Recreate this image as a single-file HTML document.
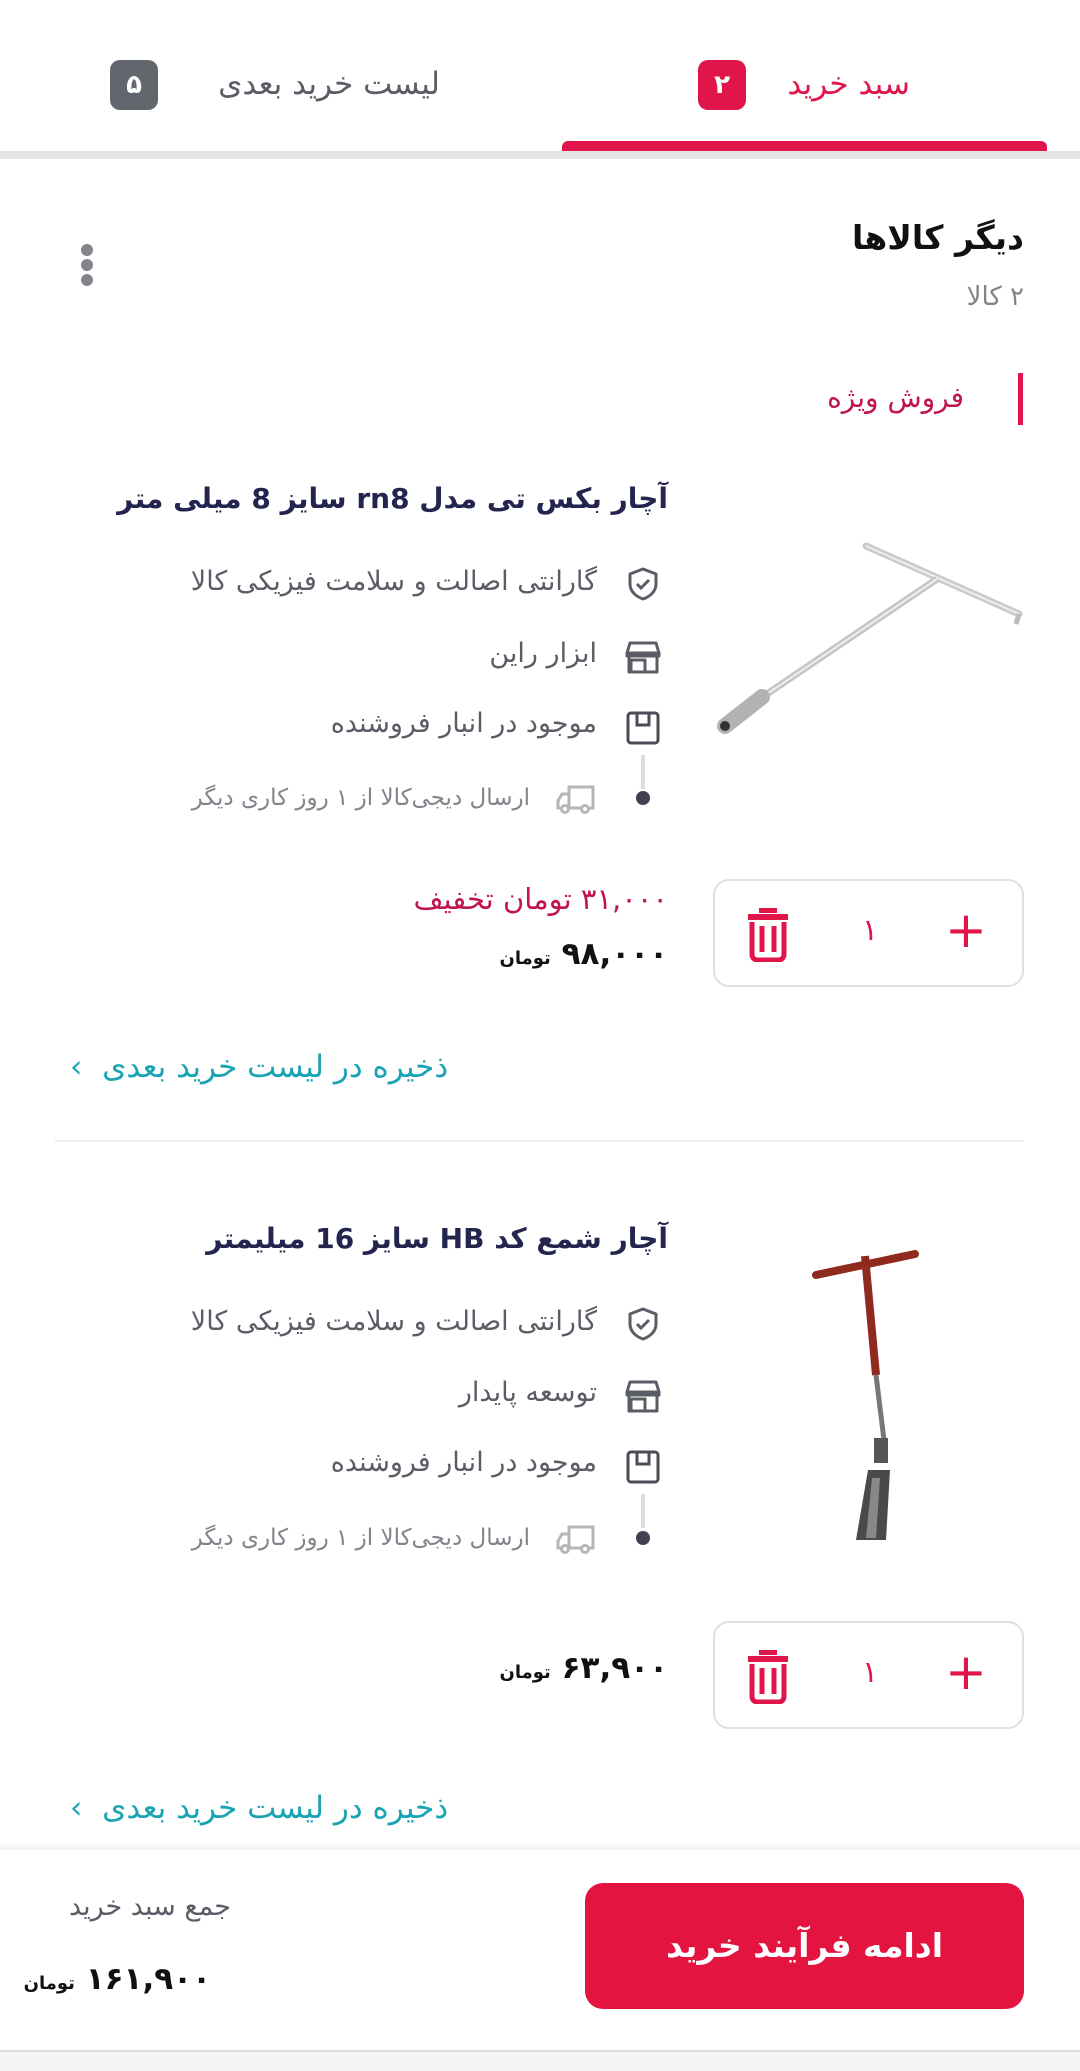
<!DOCTYPE html>
<html><head><meta charset="utf-8">
<style>
*{margin:0;padding:0;box-sizing:border-box}
body{width:1080px;height:2071px;position:relative;background:#fff;font-family:"DejaVu Sans",sans-serif;overflow:hidden;direction:rtl}
.a{position:absolute;white-space:nowrap}
.t{color:#5a5c66;font-size:27px}
.ic{position:absolute}
.badge{position:absolute;width:48px;height:50px;border-radius:10px;color:#fff;font-size:26px;font-weight:bold;text-align:center;line-height:50px}
</style></head><body>
<!-- tabs -->
<div class="a" style="right:170px;top:66px;font-size:31px;color:#e0164a;">سبد خرید</div>
<div class="badge" style="left:698px;top:60px;background:#e0164a">۲</div>
<div class="a" style="right:640px;top:66px;font-size:31px;color:#5a5c66;">لیست خرید بعدی</div>
<div class="badge" style="left:110px;top:60px;background:#62666d">۵</div>
<div class="a" style="left:562px;top:141px;width:485px;height:10px;background:#e0164a;border-radius:6px 6px 0 0"></div>
<div class="a" style="left:0;top:151px;width:1080px;height:8px;background:#e4e4e4"></div>

<div class="a" style="right:56px;top:218px;font-size:33px;font-weight:bold;color:#111">دیگر کالاها</div>
<div class="a" style="right:56px;top:282px;font-size:26px;color:#81858b">۲ کالا</div>
<div class="a" style="left:81px;top:244px;width:12px;height:12px;border-radius:6px;background:#81858b"></div>
<div class="a" style="left:81px;top:259px;width:12px;height:12px;border-radius:6px;background:#81858b"></div>
<div class="a" style="left:81px;top:274px;width:12px;height:12px;border-radius:6px;background:#81858b"></div>

<div class="a" style="left:1018px;top:373px;width:5px;height:52px;background:#e0164a"></div>
<div class="a" style="right:116px;top:381px;font-size:28px;color:#c0144a">فروش ویژه</div>

<!-- product 1 -->
<div class="a" style="right:412px;top:482px;font-size:28px;font-weight:bold;color:#23254e">آچار بکس تی مدل rn8 سایز 8 میلی متر</div>
<svg class="ic" style="left:700px;top:520px" width="340" height="240" viewBox="700 520 340 240">
<line x1="866" y1="546" x2="1019" y2="614" stroke="#c9cacc" stroke-width="7" stroke-linecap="round"/>
<line x1="866" y1="546" x2="1019" y2="614" stroke="#eee" stroke-width="2"/>
<line x1="1019" y1="614" x2="1016" y2="624" stroke="#bbb" stroke-width="5"/>
<line x1="937" y1="579" x2="758" y2="700" stroke="#c4c5c7" stroke-width="7"/>
<line x1="937" y1="579" x2="758" y2="700" stroke="#eee" stroke-width="2"/>
<line x1="762" y1="697" x2="725" y2="726" stroke="#b0b2b4" stroke-width="16" stroke-linecap="round"/>
<circle cx="725" cy="726" r="5" fill="#333"/>
</svg>
<svg class="ic" style="left:627px;top:567px" width="32" height="34" viewBox="0 0 32 34"><path d="M16 2 L29 7 V17 C29 25 22 30 16 32 C10 30 3 25 3 17 V7 Z" fill="none" stroke="#5a5c66" stroke-width="3" stroke-linejoin="round"/><path d="M10 17 L14 21 L22 13" fill="none" stroke="#5a5c66" stroke-width="3"/></svg>
<div class="a t" style="right:483px;top:566px">گارانتی اصالت و سلامت فیزیکی کالا</div>
<svg class="ic" style="left:625px;top:640px" width="36" height="34" viewBox="0 0 36 34"><path d="M5 3 H31 L34 13 H2 Z M2 13 V16 H34 V13 M4 16 V32 H32 V16 M6 32 V20 H20 V32" fill="none" stroke="#5a5c66" stroke-width="3" stroke-linejoin="round"/></svg>
<div class="a t" style="right:483px;top:638px">ابزار راین</div>
<svg class="ic" style="left:626px;top:711px" width="34" height="34" viewBox="0 0 34 34"><rect x="2" y="2" width="30" height="30" rx="3" fill="none" stroke="#4a4c56" stroke-width="3"/><path d="M11 2 V14 H23 V2" fill="none" stroke="#4a4c56" stroke-width="3"/></svg>
<div class="a t" style="right:483px;top:708px">موجود در انبار فروشنده</div>
<div class="a" style="left:641px;top:755px;width:4px;height:34px;background:#ddd"></div>
<div class="a" style="left:636px;top:791px;width:14px;height:14px;border-radius:7px;background:#3f4150"></div>
<svg class="ic" style="left:555px;top:784px" width="42" height="30" viewBox="0 0 42 30"><path d="M14 3 H38 V24 H14 Z M14 10 H7 L3 17 V24 H14" fill="none" stroke="#b5b6b8" stroke-width="3"/><circle cx="10" cy="25" r="3.5" fill="#fff" stroke="#b5b6b8" stroke-width="3"/><circle cx="30" cy="25" r="3.5" fill="#fff" stroke="#b5b6b8" stroke-width="3"/></svg>
<div class="a" style="right:550px;top:785px;font-size:23px;color:#81858b">ارسال دیجی‌کالا از ۱ روز کاری دیگر</div>

<div class="a" style="left:713px;top:879px;width:311px;height:108px;border:2px solid #e0e0e2;border-radius:16px"></div>
<div class="a" style="left:945px;top:905px;font-size:50px;color:#e0164a;line-height:50px">+</div>
<div class="a" style="left:862px;top:913px;font-size:30px;color:#e0164a">۱</div>
<svg class="ic" style="left:746px;top:906px" width="44" height="56" viewBox="0 0 44 56"><rect x="13" y="2" width="18" height="5" fill="#e0164a"/><rect x="2" y="8" width="40" height="6" fill="#e0164a"/><path d="M6 16 V48 Q6 54 12 54 H32 Q38 54 38 48 V16 M16 20 V46 M28 20 V46" fill="none" stroke="#e0164a" stroke-width="5"/></svg>
<div class="a" style="right:412px;top:882px;font-size:29px;color:#c0144a">۳۱,۰۰۰ تومان تخفیف</div>
<div class="a" style="right:412px;top:936px;font-size:31px;font-weight:bold;color:#111">۹۸,۰۰۰ <span style="font-size:18px">تومان</span></div>
<div class="a" style="left:70px;top:1049px;font-size:31px;color:#19a4b4;direction:ltr">‹&nbsp;&nbsp;<span style="direction:rtl;unicode-bidi:embed">ذخیره در لیست خرید بعدی</span></div>

<div class="a" style="left:55px;top:1140px;width:969px;height:2px;background:#ececec"></div>

<!-- product 2 -->
<div class="a" style="right:412px;top:1222px;font-size:28px;font-weight:bold;color:#23254e">آچار شمع کد HB  سایز 16 میلیمتر</div>
<svg class="ic" style="left:780px;top:1240px" width="160" height="310" viewBox="780 1240 160 310">
<line x1="816" y1="1275" x2="915" y2="1254" stroke="#8f2a1e" stroke-width="8" stroke-linecap="round"/>
<line x1="865" y1="1256" x2="876" y2="1375" stroke="#8f2a1e" stroke-width="8"/>
<line x1="876" y1="1375" x2="884" y2="1440" stroke="#777" stroke-width="5"/>
<rect x="874" y="1438" width="14" height="25" fill="#555"/>
<path d="M868 1470 L890 1470 L886 1540 L856 1540 Z" fill="#4a4a4a"/>
<path d="M872 1478 L880 1478 L876 1538 L866 1538 Z" fill="#888"/>
</svg>
<svg class="ic" style="left:627px;top:1307px" width="32" height="34" viewBox="0 0 32 34"><path d="M16 2 L29 7 V17 C29 25 22 30 16 32 C10 30 3 25 3 17 V7 Z" fill="none" stroke="#5a5c66" stroke-width="3" stroke-linejoin="round"/><path d="M10 17 L14 21 L22 13" fill="none" stroke="#5a5c66" stroke-width="3"/></svg>
<div class="a t" style="right:483px;top:1306px">گارانتی اصالت و سلامت فیزیکی کالا</div>
<svg class="ic" style="left:625px;top:1379px" width="36" height="34" viewBox="0 0 36 34"><path d="M5 3 H31 L34 13 H2 Z M2 13 V16 H34 V13 M4 16 V32 H32 V16 M6 32 V20 H20 V32" fill="none" stroke="#5a5c66" stroke-width="3" stroke-linejoin="round"/></svg>
<div class="a t" style="right:483px;top:1377px">توسعه پایدار</div>
<svg class="ic" style="left:626px;top:1450px" width="34" height="34" viewBox="0 0 34 34"><rect x="2" y="2" width="30" height="30" rx="3" fill="none" stroke="#4a4c56" stroke-width="3"/><path d="M11 2 V14 H23 V2" fill="none" stroke="#4a4c56" stroke-width="3"/></svg>
<div class="a t" style="right:483px;top:1447px">موجود در انبار فروشنده</div>
<div class="a" style="left:641px;top:1494px;width:4px;height:34px;background:#ddd"></div>
<div class="a" style="left:636px;top:1531px;width:14px;height:14px;border-radius:7px;background:#3f4150"></div>
<svg class="ic" style="left:555px;top:1524px" width="42" height="30" viewBox="0 0 42 30"><path d="M14 3 H38 V24 H14 Z M14 10 H7 L3 17 V24 H14" fill="none" stroke="#b5b6b8" stroke-width="3"/><circle cx="10" cy="25" r="3.5" fill="#fff" stroke="#b5b6b8" stroke-width="3"/><circle cx="30" cy="25" r="3.5" fill="#fff" stroke="#b5b6b8" stroke-width="3"/></svg>
<div class="a" style="right:550px;top:1525px;font-size:23px;color:#81858b">ارسال دیجی‌کالا از ۱ روز کاری دیگر</div>

<div class="a" style="left:713px;top:1621px;width:311px;height:108px;border:2px solid #e0e0e2;border-radius:16px"></div>
<div class="a" style="left:945px;top:1647px;font-size:50px;color:#e0164a;line-height:50px">+</div>
<div class="a" style="left:862px;top:1655px;font-size:30px;color:#e0164a">۱</div>
<svg class="ic" style="left:746px;top:1648px" width="44" height="56" viewBox="0 0 44 56"><rect x="13" y="2" width="18" height="5" fill="#e0164a"/><rect x="2" y="8" width="40" height="6" fill="#e0164a"/><path d="M6 16 V48 Q6 54 12 54 H32 Q38 54 38 48 V16 M16 20 V46 M28 20 V46" fill="none" stroke="#e0164a" stroke-width="5"/></svg>
<div class="a" style="right:412px;top:1650px;font-size:31px;font-weight:bold;color:#111">۶۳,۹۰۰ <span style="font-size:18px">تومان</span></div>
<div class="a" style="left:70px;top:1790px;font-size:31px;color:#19a4b4;direction:ltr">‹&nbsp;&nbsp;<span style="direction:rtl;unicode-bidi:embed">ذخیره در لیست خرید بعدی</span></div>

<!-- bottom bar -->
<div class="a" style="left:0;top:1850px;width:1080px;height:200px;background:#fff;box-shadow:0 -3px 6px rgba(0,0,0,0.08)"></div>
<div class="a" style="right:849px;top:1891px;font-size:27px;color:#5a5c66">جمع سبد خرید</div>
<div class="a" style="right:869px;top:1961px;font-size:31px;font-weight:bold;color:#111">۱۶۱,۹۰۰ <span style="font-size:18px">تومان</span></div>
<div class="a" style="left:585px;top:1883px;width:439px;height:126px;background:#e3143f;border-radius:18px;color:#fff;font-size:33px;font-weight:bold;text-align:center;line-height:126px">ادامه فرآیند خرید</div>
<div class="a" style="left:0;top:2050px;width:1080px;height:21px;background:#f5f5f5;border-top:2px solid #ddd"></div>
</body></html>
